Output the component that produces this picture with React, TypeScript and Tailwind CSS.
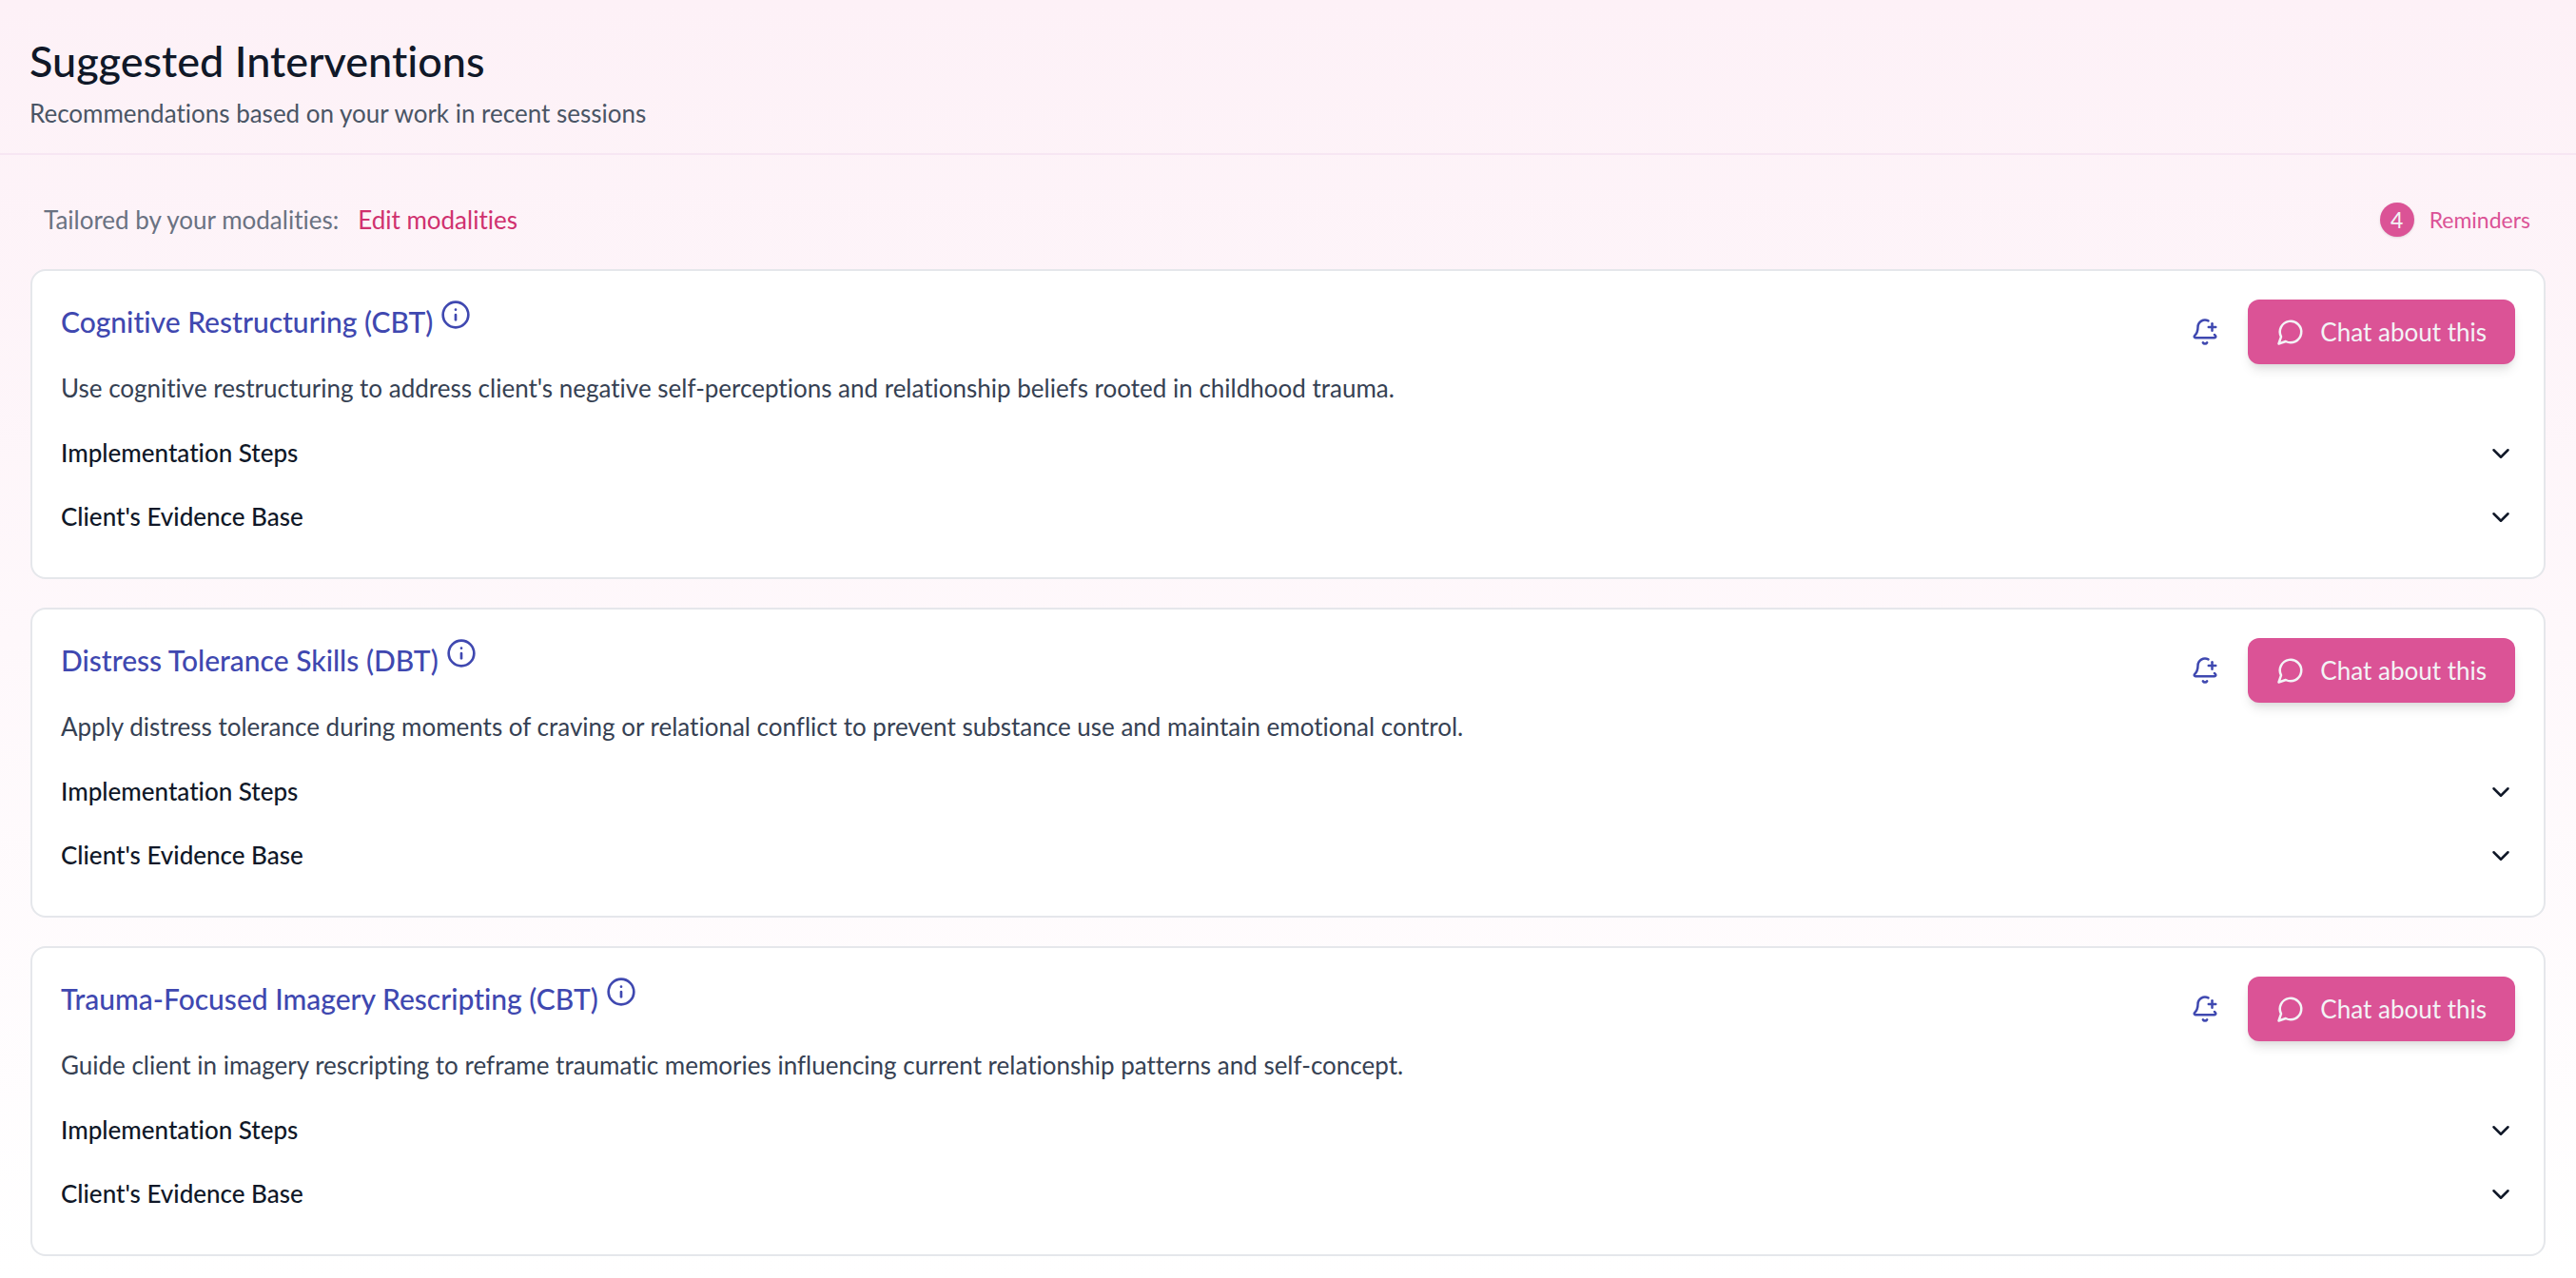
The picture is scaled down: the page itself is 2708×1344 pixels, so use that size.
import React from 'react'
import { BellPlus, ChevronDown, Info } from 'lucide-react'

const interventions = [
  {
    title: 'Cognitive Restructuring (CBT)',
    description:
      "Use cognitive restructuring to address client's negative self-perceptions and relationship beliefs rooted in childhood trauma.",
  },
  {
    title: 'Distress Tolerance Skills (DBT)',
    description:
      'Apply distress tolerance during moments of craving or relational conflict to prevent substance use and maintain emotional control.',
  },
  {
    title: 'Trauma-Focused Imagery Rescripting (CBT)',
    description:
      'Guide client in imagery rescripting to reframe traumatic memories influencing current relationship patterns and self-concept.',
  },
]

const sections = ['Implementation Steps', "Client's Evidence Base"]

function ChatIcon() {
  return (
    <svg
      className="size-[30px]"
      viewBox="0 0 24 24"
      fill="none"
      stroke="currentColor"
      strokeWidth="2"
      strokeLinecap="round"
      strokeLinejoin="round"
      aria-hidden="true"
    >
      <path d="M7.9 20A9 9 0 1 0 4 16.1L2 22Z" />
    </svg>
  )
}

function InterventionCard({ title, description }: { title: string; description: string }) {
  return (
    <article className="rounded-2xl border-2 border-gray-200 bg-white p-[30px]">
      <div className="flex items-start justify-between">
        <div className="flex items-start gap-2">
          <h2 className="text-[30px] leading-[46px] font-medium text-[#3f48b0]">{title}</h2>
          <button type="button" aria-label={`About ${title}`} className="text-[#3f48b0]">
            <Info size={32} />
          </button>
        </div>
        <div className="flex items-center gap-4">
          <button type="button" aria-label="Add reminder" className="p-[14px] text-[#3f48b0]">
            <BellPlus size={30} />
          </button>
          <button
            type="button"
            className="flex h-[68px] items-center gap-4 rounded-xl bg-[#db5396] px-[30px] text-[26px] text-gray-100 shadow-[0_8px_12px_-2px_rgba(0,0,0,0.1),0_4px_8px_-4px_rgba(0,0,0,0.1)]"
          >
            <ChatIcon />
            Chat about this
          </button>
        </div>
      </div>
      <p className="mt-[5px] text-[26px] leading-[40px] text-gray-700">{description}</p>
      <div className="mt-[15px]">
        {sections.map((section) => (
          <button
            key={section}
            type="button"
            className="flex h-[67px] w-full items-center justify-between text-[26px] font-medium text-gray-900"
          >
            {section}
            <ChevronDown size={30} />
          </button>
        ))}
      </div>
    </article>
  )
}

export default function App() {
  return (
    <div className="min-h-screen bg-linear-to-b from-[#fdf1f7] to-white font-['Lato',sans-serif] [font-variant-ligatures:none]">
      <header className="border-b-2 border-[#f7e6f3] px-[31px] pt-[36px] pb-[22px]">
        <h1 className="text-[45px] leading-[56px] font-medium text-gray-900">Suggested Interventions</h1>
        <p className="mt-[7px] text-[26px] leading-[40px] text-gray-600">
          Recommendations based on your work in recent sessions
        </p>
      </header>

      <main className="px-[32px] pt-[40px] pb-[20px]">
        <div className="flex items-center justify-between pr-[16px] pb-[24px] pl-[14px]">
          <p className="flex items-center gap-5 text-[26px] leading-[56px] text-gray-500">
            Tailored by your modalities:
            <a href="#modalities" className="text-[#d0316f]">
              Edit modalities
            </a>
          </p>
          <button type="button" className="flex items-center gap-4 text-[23px] text-[#db5396]">
            <span className="flex size-[36px] items-center justify-center rounded-full bg-[#db5396] text-gray-100 shadow-sm">
              4
            </span>
            Reminders
          </button>
        </div>

        <div className="flex flex-col gap-[30px]">
          {interventions.map((item) => (
            <InterventionCard key={item.title} title={item.title} description={item.description} />
          ))}
        </div>
      </main>
    </div>
  )
}
